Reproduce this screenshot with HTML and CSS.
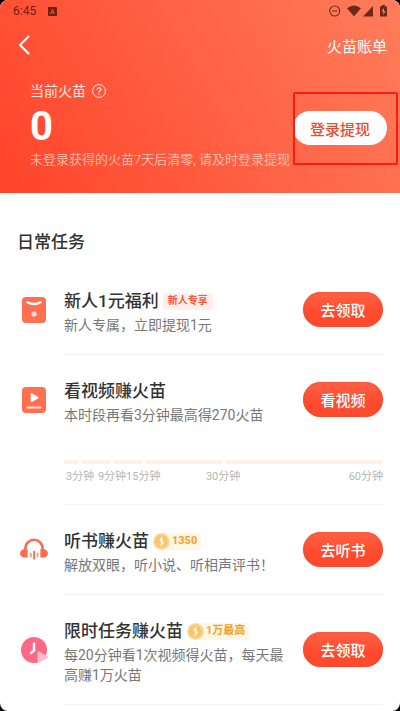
FILE: index.html
```html
<!DOCTYPE html>
<html lang="zh-CN">
<head>
<meta charset="utf-8">
<meta name="viewport" content="width=device-width, initial-scale=1">
<title>火苗</title>
<link rel="stylesheet" href="styles.css">
</head>
<body>
<div class="screen">
  <header class="hero">
    <div class="status">
      <span class="clock">6:45</span>
      <svg width="9" height="9" viewBox="0 0 9 9"><rect width="9" height="9" rx="1" fill="#6d2013"/><path d="M2.600 7 4.500 2.300 6.400 7M3.300 5.500H5.700" fill="none" stroke="#f8573a" stroke-width="1"/></svg>
      <span class="status-icons">
        <svg width="58" height="12" viewBox="0 0 58 12" fill="#6d2a1c">
          <circle cx="5.700" cy="6" r="5" fill="none" stroke="#6d2a1c" stroke-width="1.100"/>
          <path d="M3 5.400h5.400v1.200H3z"/>
          <path d="M18 3.200Q25 -2.200 32 3.200L25 11.500z"/>
          <path d="M44 1v10.500H34z"/>
          <path fill-rule="evenodd" d="M53 0h3v1.200h1.500q.5 0 .5.500v9.300q0 .500-.5.500h-6q-.5 0-.5-.5V1.700q0-.5.5-.5H53zM55 3l-2.500 3.600h1.700V10l2.400-3.900H55z"/>
        </svg>
      </span>
    </div>
    <nav class="nav">
      <button class="back" type="button" aria-label="返回"><svg width="12" height="20" viewBox="0 0 12 20"><path d="M11 1 2 10l9 9" fill="none" stroke="#fff" stroke-width="2.200" stroke-linejoin="round"/></svg></button>
      <a class="bill" href="#">火苗账单</a>
    </nav>
    <section class="balance">
      <div class="balance-info">
        <div class="balance-label">当前火苗
          <svg width="14" height="14" viewBox="0 0 14 14" fill="none" stroke="#ffe3dc"><circle cx="7" cy="7" r="6.400"/><path d="M5.100 5.700C5.100 3.100 8.900 3.100 8.900 5.500 8.900 6.900 7 6.800 7 8.500" stroke-width="1.200"/><circle cx="7" cy="10.200" r=".5" fill="#ffe3dc" stroke-width=".4"/></svg>
        </div>
        <div class="amount">0</div>
        <p class="note">未登录获得的火苗7天后清零, 请及时登录提现</p>
      </div>
      <div class="cash">
        <button class="cash-button" type="button">登录提现</button>
        <span class="highlight"></span>
      </div>
    </section>
  </header>

  <main class="tasks">
    <h1>日常任务</h1>
    <article class="task">
      <svg class="icon" width="28" height="28" viewBox="0 0 28 28"><rect x="2" y="1" width="24" height="26" rx="4" fill="#ff6f50"/><path d="M7.500 6.300Q14 9.800 20.500 6.300" fill="none" stroke="#fff" stroke-width="2.400" stroke-linecap="round"/><circle cx="14" cy="18" r="2.600" fill="#ffe0d7"/></svg>
      <div class="body">
        <div class="row">
          <div class="text"><h2>新人1元福利<span class="tag">新人专享</span></h2><p>新人专属，立即提现1元</p></div>
          <button class="go" type="button">去领取</button>
        </div>
      </div>
    </article>
    <article class="task tall">
      <svg class="icon" width="28" height="28" viewBox="0 0 28 28"><rect x="2" y="1" width="24" height="26" rx="4" fill="#ff6f50"/><path d="M11.500 8v7.400L17.600 11.700z" fill="#fff" stroke="#fff" stroke-width="1.600" stroke-linejoin="round"/><path d="M7.500 21.500h13" stroke="#ffe0d7" stroke-width="2.200" stroke-linecap="round"/></svg>
      <div class="body">
        <div class="row">
          <div class="text"><h2>看视频赚火苗</h2><p>本时段再看3分钟最高得270火苗</p></div>
          <button class="go" type="button">看视频</button>
        </div>
        <div class="progress">
          <div class="bars"><i></i><i></i><i></i><i></i><i></i></div>
          <div class="marks"><span>3分钟</span><span>9分钟</span><span>15分钟</span><span>30分钟</span><span>60分钟</span></div>
        </div>
      </div>
    </article>
    <article class="task">
      <svg class="icon" width="28" height="28" viewBox="0 0 28 28"><path d="M5.300 16V13.500C5.300 .5 22.700 .5 22.700 13.500V16" fill="none" stroke="#fb6b4e" stroke-width="2.600"/><path d="M7.600 13V21.500H4.500C-1.400 21.500-1.400 13.500 4.500 13zM20.400 13V21.500h3.100c5.900 0 5.900-8 0-8.500z" fill="#fb6b4e"/><path d="M10.900 17.300v3.500M17.600 17.300v3.500" stroke="#fb8c76" stroke-width="1.500" stroke-linecap="round"/><path d="M14.200 15.800v7" stroke="#fb6b4e" stroke-width="2" stroke-linecap="round"/></svg>
      <div class="body">
        <div class="row">
          <div class="text"><h2>听书赚火苗<span class="tag gold"><svg class="coin" width="17" height="17" viewBox="0 0 17 17"><circle cx="8.500" cy="8.500" r="8.300" fill="#fbd590"/><circle cx="8.500" cy="8.500" r="6.200" fill="#f8c46e"/><path d="M9.300 3.800Q5.300 7 7.800 8.600 9 9.600 7.500 13.300 12 10 9.700 8.200 8.300 7 9.300 3.800z" fill="#fff4d8" stroke="#fff4d8" stroke-width=".6"/></svg>1350</span></h2><p>解放双眼，听小说、听相声评书！</p></div>
          <button class="go" type="button">去听书</button>
        </div>
      </div>
    </article>
    <article class="task">
      <svg class="icon" width="28" height="28" viewBox="0 0 28 28"><circle cx="14" cy="14" r="13" fill="#ff6983"/><path d="M14 7.500v7l-3 2.500" fill="none" stroke="#fff" stroke-width="2.400" stroke-linecap="round" stroke-linejoin="round"/><path d="M18.500 16.500v9.300l8.500-4.600z" fill="#ffbdcb" stroke="#ffbdcb" stroke-width="2" stroke-linejoin="round"/></svg>
      <div class="body">
        <div class="row">
          <div class="text"><h2>限时任务赚火苗<span class="tag gold"><svg class="coin" width="17" height="17" viewBox="0 0 17 17"><circle cx="8.500" cy="8.500" r="8.300" fill="#fbd590"/><circle cx="8.500" cy="8.500" r="6.200" fill="#f8c46e"/><path d="M9.300 3.800Q5.300 7 7.800 8.600 9 9.600 7.500 13.300 12 10 9.700 8.200 8.300 7 9.300 3.800z" fill="#fff4d8" stroke="#fff4d8" stroke-width=".6"/></svg>1万最高</span></h2><p>每20分钟看1次视频得火苗，每天最高赚1万火苗</p></div>
          <button class="go" type="button">去领取</button>
        </div>
      </div>
    </article>
  </main>
</div>
</body>
</html>
```
FILE: styles.css
```css
* { box-sizing: border-box; }
body { margin: 0; background: #000; font-family: Roboto, "Noto Sans CJK SC", sans-serif; color: #333; }
h1, h2, p { margin: 0; }
svg { display: block; flex: none; }
button { border: 0; padding: 0; font-family: inherit; }
.screen { background: #fff; border-radius: 8px; overflow: hidden; min-height: 100vh; }

.hero { background: linear-gradient(60deg, #ff442b 0%, #ff5a3e 40%, #ff7d5b 100%); color: #fff; padding-bottom: 25px; }
.status { display: flex; align-items: center; height: 22px; padding: 0 13px; gap: 12px; color: #6d2013; font-size: 12px; }
.status-icons { margin-left: auto; }
.nav { display: flex; align-items: center; justify-content: space-between; height: 46px; padding: 0 13px 0 18px; }
.back { background: none; }
.bill { color: #fff; font-size: 15px; text-decoration: none; }
.balance { display: flex; align-items: center; justify-content: space-between; padding: 12px 13px 0 30px; }
.balance-info { flex: 1; min-width: 0; }
.balance-label { display: flex; align-items: center; gap: 6px; font-size: 14px; line-height: 22px; color: #ffe9e3; }
.amount { font-size: 40px; font-weight: 700; line-height: 50px; }
.note { font-size: 13px; line-height: 16px; color: #ffb8a6; white-space: nowrap; }
.cash { position: relative; flex: none; margin-top: 8px; }
.cash-button { display: block; width: 94px; height: 34px; border-radius: 17px; background: #fff; color: #ea4a32; font-size: 15px; font-weight: 500; }
.highlight { position: absolute; top: -19px; left: 0; right: -11px; height: 73px; border: 2px solid #fb1b10; border-radius: 2px; pointer-events: none; }

.tasks { padding: 37px 17px 0; }
h1 { font-size: 17px; font-weight: 500; line-height: 24px; margin-bottom: 11px; }
.task { display: flex; align-items: center; gap: 16px; }
.icon { margin-left: 3px; }
.tall { align-items: flex-start; }
.tall .icon { margin-top: 31px; }
.body { flex: 1; min-width: 0; border-bottom: 1px solid #f3f3f3; }
.row { display: flex; align-items: center; justify-content: space-between; gap: 16px; padding: 19px 0; }
.text { padding-top: 4px; }
h2 { display: flex; align-items: center; gap: 4px; margin-bottom: 1px; font-size: 17px; font-weight: 500; line-height: 26px; white-space: nowrap; }
.text p { font-size: 14px; line-height: 20px; color: #777; }
.go { flex: none; width: 80px; height: 35px; border-radius: 18px; color: #fff; font-size: 15px; font-weight: 500; background: linear-gradient(#ff6245, #ff4a2e 60%); box-shadow: inset 0 0 3px #f4462c; }
.tag { display: flex; align-items: center; height: 17px; padding: 0 5px; border-radius: 4px; background: #ffefeb; color: #f9573c; font-size: 10px; font-weight: 700; }
.gold { gap: 2px; padding: 0 4px 0 0; border-radius: 8px 4px 4px 8px; background: #fff6e3; color: #f3a01f; font-size: 11px; }
.progress { padding: 16px 0 18px; }
.bars { display: grid; grid-template-columns: 15fr 30fr 30fr 78fr 158fr; gap: 2px; margin-bottom: 4px; }
.bars i { height: 4px; background: #fff0ec; }
.marks { display: grid; grid-template-columns: 32fr 28fr 80fr 143fr 34fr; padding-left: 2px; font-size: 11px; line-height: 18px; color: #b5b5b5; white-space: nowrap; }
```
